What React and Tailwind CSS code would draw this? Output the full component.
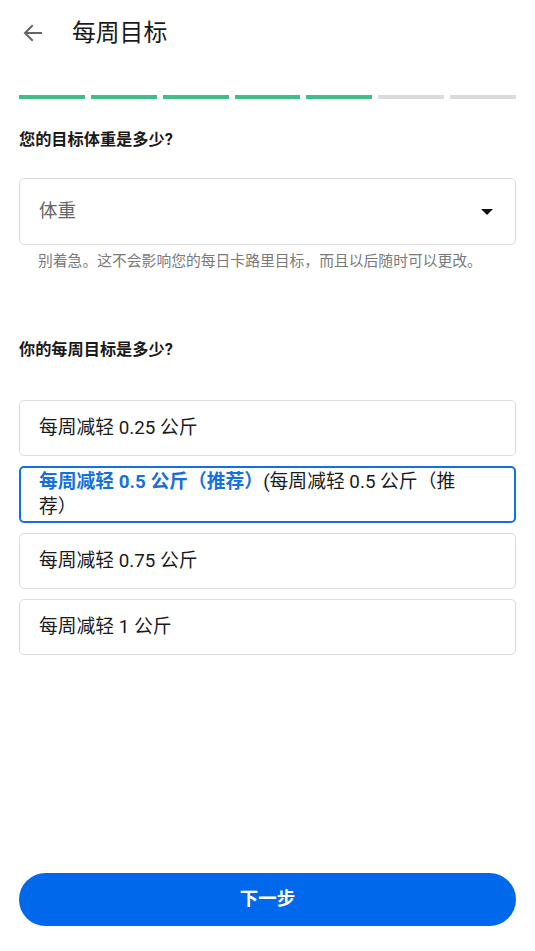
import React from "react";

const font = { fontFamily: 'Roboto, "Noto Sans CJK SC", "Noto Sans", sans-serif' };

export default function App() {
  const segs = [1, 1, 1, 1, 1, 0, 0];
  const options = ["每周减轻 0.25 公斤", null, "每周减轻 0.75 公斤", "每周减轻 1 公斤"];
  return (
    <div className="h-[951px] w-[535px] bg-white flex flex-col text-[#1a1a1a]" style={font}>
      <div className="h-[66px] flex items-center pl-[21px]">
        <svg width="24" height="24" viewBox="0 0 24 24" fill="none" stroke="#666" strokeWidth="2" strokeLinecap="square">
          <path d="M20 12H4.5M11 5l-7 7 7 7" />
        </svg>
        <span className="ml-[27px] text-[23.8px] leading-[30px]">每周目标</span>
      </div>
      <div className="px-[19px] mt-[29px] flex gap-[6px]">
        {segs.map((s, i) => (
          <div key={i} className={"flex-1 h-[4px] " + (s ? "bg-[#3dbf85]" : "bg-[#dadada]")} />
        ))}
      </div>
      <div className="px-[19px]">
        <div className="mt-[30px] text-[16.2px] leading-[22px] font-bold">您的目标体重是多少?</div>
        <div className="mt-[27px] h-[67px] border border-[#dcdcdc] rounded-[5px] flex items-center justify-between pl-[19px] pr-[22px]">
          <span className="text-[18.5px] text-[#666]">体重</span>
          <svg width="12" height="6" viewBox="0 0 12 6">
            <path d="M0 0h12L6 6z" fill="#111" />
          </svg>
        </div>
        <div className="mt-[7px] pl-[19px] text-[14.8px] leading-[18px] text-[#7a7a7a] whitespace-nowrap">
          别着急。这不会影响您的每日卡路里目标，而且以后随时可以更改。
        </div>
        <div className="mt-[69px] text-[16.2px] leading-[22px] font-bold">你的每周目标是多少?</div>
        <div className="mt-[39px] flex flex-col gap-[10px]">
          {options.map((o, i) =>
            o ? (
              <div key={i} className="h-[56px] border border-[#dcdcdc] rounded-[5px] flex items-center pl-[19px] text-[18.8px]">
                {o}
              </div>
            ) : (
              <div key={i} className="h-[57px] border-2 border-[#1470dc] rounded-[5px] flex items-center pl-[18px] pr-[45px]">
                <p className="flex-1 min-w-0 text-[18.8px] leading-[25px]">
                  <span className="font-bold text-[#1470dc]">每周减轻 0.5 公斤（推荐）</span>(每周减轻 0.5 公斤（推荐）
                </p>
              </div>
            )
          )}
        </div>
      </div>
      <div className="mt-auto px-[19px] pb-[25px]">
        <button className="w-full h-[53px] rounded-full bg-[#0068ea] text-white text-[18.5px] font-bold">下一步</button>
      </div>
    </div>
  );
}
